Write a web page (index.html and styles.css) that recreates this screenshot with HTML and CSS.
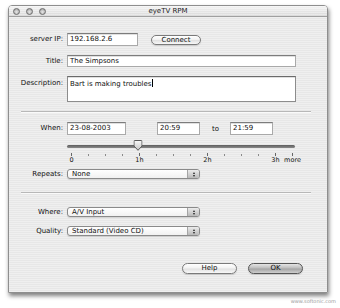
FILE: index.html
```html
<!DOCTYPE html>
<html>
<head>
<meta charset="utf-8">
<title>eyeTV RPM</title>
<link rel="stylesheet" href="styles.css">
</head>
<body>
<div class="window">
  <div class="titlebar">
    <div class="lights"><span class="light"></span><span class="light"></span><span class="light"></span></div>
    <div class="title">eyeTV RPM</div>
    <div class="lights-spacer"></div>
  </div>
  <div class="content">
    <div class="row r-ip">
      <span class="lbl">server IP:</span>
      <div class="field f-ip">192.168.2.6</div>
      <div class="btn btn-connect">Connect</div>
    </div>
    <div class="row r-title">
      <span class="lbl">Title:</span>
      <div class="field f-title">The Simpsons</div>
    </div>
    <div class="row r-desc">
      <span class="lbl lbl-top">Description:</span>
      <div class="field f-desc">Bart is making troubles<span class="caret"></span></div>
    </div>
    <div class="sep sep-1"></div>
    <div class="row r-when">
      <span class="lbl">When:</span>
      <div class="field f-date">23-08-2003</div>
      <div class="field f-time f-time1">20:59</div>
      <span class="to">to</span>
      <div class="field f-time f-time2">21:59</div>
    </div>
    <div class="slider">
      <div class="track"></div>
      <svg class="thumb" style="left: 31%" width="9" height="11" viewBox="0 0 9 11">
        <defs>
          <linearGradient id="tg" x1="0" y1="0" x2="0" y2="1">
            <stop offset="0" stop-color="#fafafa"/>
            <stop offset="1" stop-color="#c4c4c4"/>
          </linearGradient>
        </defs>
        <path d="M1 0.5 H8 Q8.5 0.5 8.5 1 V6 L4.5 10.3 L0.5 6 V1 Q0.5 0.5 1 0.5 Z" fill="url(#tg)" stroke="#5a5a5a" stroke-width="1"/>
      </svg>
    </div>
    <div class="ticks">
      <div class="tick major"><i></i><span>0</span></div>
      <div class="tick"><i></i></div>
      <div class="tick"><i></i></div>
      <div class="tick"><i></i></div>
      <div class="tick major"><i></i><span>1h</span></div>
      <div class="tick"><i></i></div>
      <div class="tick"><i></i></div>
      <div class="tick"><i></i></div>
      <div class="tick major"><i></i><span>2h</span></div>
      <div class="tick"><i></i></div>
      <div class="tick"><i></i></div>
      <div class="tick"><i></i></div>
      <div class="tick major"><i></i><span>3h</span></div>
      <div class="tick major"><i></i><span>more</span></div>
    </div>
    <div class="row r-repeats">
      <span class="lbl">Repeats:</span>
      <div class="popup"><span class="ptext">None</span><span class="parrows"><b class="up"></b><b class="down"></b></span></div>
    </div>
    <div class="sep sep-2"></div>
    <div class="row r-where">
      <span class="lbl">Where:</span>
      <div class="popup"><span class="ptext">A/V Input</span><span class="parrows"><b class="up"></b><b class="down"></b></span></div>
    </div>
    <div class="row r-quality">
      <span class="lbl">Quality:</span>
      <div class="popup"><span class="ptext">Standard (Video CD)</span><span class="parrows"><b class="up"></b><b class="down"></b></span></div>
    </div>
    <div class="buttons">
      <div class="btn btn-help">Help</div>
      <div class="btn btn-ok">OK</div>
    </div>
  </div>
</div>
<div class="watermark">www.softonic.com</div>
</body>
</html>
```

FILE: styles.css
```css
html, body {
  margin: 0;
  padding: 0;
  background: #ffffff;
}
body {
  font-family: "DejaVu Sans", Verdana, sans-serif;
  font-size: 7px;
  color: #111;
  width: 340px;
  height: 308px;
  overflow: hidden;
}
.window {
  margin: 5px 0 0 8px;
  width: 320px;
  height: 288px;
  box-sizing: border-box;
  border: 1px solid #8e8e8e;
  border-radius: 4px 4px 0 0;
  box-shadow: 1px 3px 4px rgba(0, 0, 0, 0.5);
  display: flex;
  flex-direction: column;
  overflow: hidden;
}
.titlebar {
  height: 10px;
  flex: none;
  border-bottom: 1px solid #a0a0a0;
  background:
    repeating-linear-gradient(to bottom, rgba(255,255,255,0.35) 0 1px, rgba(0,0,0,0) 1px 2px),
    linear-gradient(to bottom, #f3f3f3, #dadada);
  display: flex;
  align-items: center;
}
.lights {
  width: 44px;
  display: flex;
  gap: 6px;
  padding-left: 4px;
  box-sizing: border-box;
}
.lights-spacer {
  width: 44px;
}
.light {
  width: 7px;
  height: 7px;
  box-sizing: border-box;
  border-radius: 50%;
  border: 1px solid #6c6c6c;
  background: radial-gradient(circle at 50% 60%, #e8e8e8 0, #bdbdbd 55%, #8c8c8c 100%);
}
.title {
  flex: 1;
  text-align: center;
  line-height: 10px;
  color: #222;
}
.content {
  flex: 1;
  display: flex;
  flex-direction: column;
  background: repeating-linear-gradient(to bottom, #efefef 0 1px, #e7e7e7 1px 2px);
}
.row {
  display: flex;
  align-items: center;
}
.lbl {
  width: 54px;
  margin-right: 4px;
  text-align: right;
  flex: none;
  line-height: 9px;
}
.field {
  box-sizing: border-box;
  background: #fff;
  border: 1px solid #a9a9a9;
  border-top-color: #7c7c7c;
  box-shadow: inset 0 1px 0 #e0e0e0;
  padding: 0 2px;
  line-height: 11px;
  white-space: nowrap;
}
.r-ip { margin-top: 16px; }
.f-ip { width: 71px; height: 13px; }
.btn {
  box-sizing: border-box;
  border: 1px solid #7a7a7a;
  border-radius: 6px;
  background: linear-gradient(to bottom, #ffffff 0%, #f2f2f2 45%, #e2e2e2 55%, #f8f8f8 100%);
  text-align: center;
  color: #111;
  box-shadow: 0 1px 1px rgba(0,0,0,0.15);
}
.btn-connect {
  margin-left: 13px;
  width: 50px;
  height: 10px;
  line-height: 8px;
}
.r-title { margin-top: 9px; }
.f-title { width: 229px; height: 12px; line-height: 10px; }
.r-desc { margin-top: 9px; align-items: flex-start; }
.lbl-top { padding-top: 3px; }
.f-desc {
  width: 229px;
  height: 26px;
  padding-top: 2px;
  line-height: 9px;
  border-color: #8c8c8c;
  border-top-color: #6a6a6a;
}
.caret {
  display: inline-block;
  width: 1px;
  height: 8px;
  background: #000;
  vertical-align: -1px;
}
.sep {
  margin-left: 12px;
  width: 290px;
  height: 0;
  border-top: 1px solid #b8b8b8;
  border-bottom: 1px solid #fafafa;
}
.sep-1 { margin-top: 9px; }
.r-when { margin-top: 9px; }
.f-date { width: 59px; height: 13px; }
.f-time { width: 43px; height: 13px; }
.f-time1 { margin-left: 31px; }
.to { margin-left: 12px; margin-right: 11px; }
.slider {
  position: relative;
  margin-top: 5px;
  margin-left: 58px;
  width: 228px;
  height: 11px;
}
.track {
  margin-top: 5px;
  height: 3px;
  border-radius: 2px;
  background: linear-gradient(to bottom, #5c5c5c, #8a8a8a);
}
.thumb {
  position: absolute;
  top: 0;
  transform: translateX(-50%);
}
.ticks {
  margin-top: 1px;
  margin-left: 54px;
  display: grid;
  grid-template-columns: repeat(14, 17px);
}
.tick {
  display: flex;
  flex-direction: column;
  align-items: center;
  height: 12px;
}
.tick i {
  display: block;
  width: 1px;
  height: 2px;
  margin-top: 2px;
  background: #8a8a8a;
}
.tick.major i {
  height: 3px;
  margin-top: 1px;
  background: #666;
}
.tick span {
  margin-top: 1px;
  line-height: 7px;
  white-space: nowrap;
  font-size: 6.5px;
}
.r-repeats { margin-top: 5px; }
.popup {
  box-sizing: border-box;
  width: 133px;
  height: 10px;
  border: 1px solid #8a8a8a;
  border-radius: 3px;
  background: linear-gradient(to bottom, #ffffff, #f1f1f1);
  display: flex;
  overflow: hidden;
  box-shadow: 0 1px 1px rgba(0,0,0,0.12);
}
.ptext {
  flex: 1;
  padding-left: 4px;
  line-height: 8px;
  white-space: nowrap;
}
.parrows {
  width: 11px;
  border-left: 1px solid #a5a5a5;
  background: linear-gradient(to bottom, #ececec, #b9b9b9);
  display: flex;
  flex-direction: column;
  align-items: center;
  justify-content: center;
  gap: 1px;
}
.parrows b {
  display: block;
  width: 0;
  height: 0;
  border-left: 1.5px solid transparent;
  border-right: 1.5px solid transparent;
}
.parrows .up { border-bottom: 2px solid #222; }
.parrows .down { border-top: 2px solid #222; }
.sep-2 { margin-top: 13px; }
.r-where { margin-top: 13px; }
.r-quality { margin-top: 9px; }
.buttons {
  margin-top: 27px;
  display: flex;
  justify-content: flex-end;
  gap: 11px;
  padding-right: 24px;
}
.btn-help, .btn-ok {
  width: 55px;
  height: 11px;
  line-height: 9px;
}
.btn-ok {
  border-color: #555;
  background: linear-gradient(to bottom, #e4e4e4 0%, #bdbdbd 45%, #a4a4a4 55%, #cfcfcf 100%);
}
.watermark {
  margin-top: 5px;
  padding-right: 4px;
  text-align: right;
  font-size: 5px;
  line-height: 6px;
  color: #9a9a9a;
}
```
